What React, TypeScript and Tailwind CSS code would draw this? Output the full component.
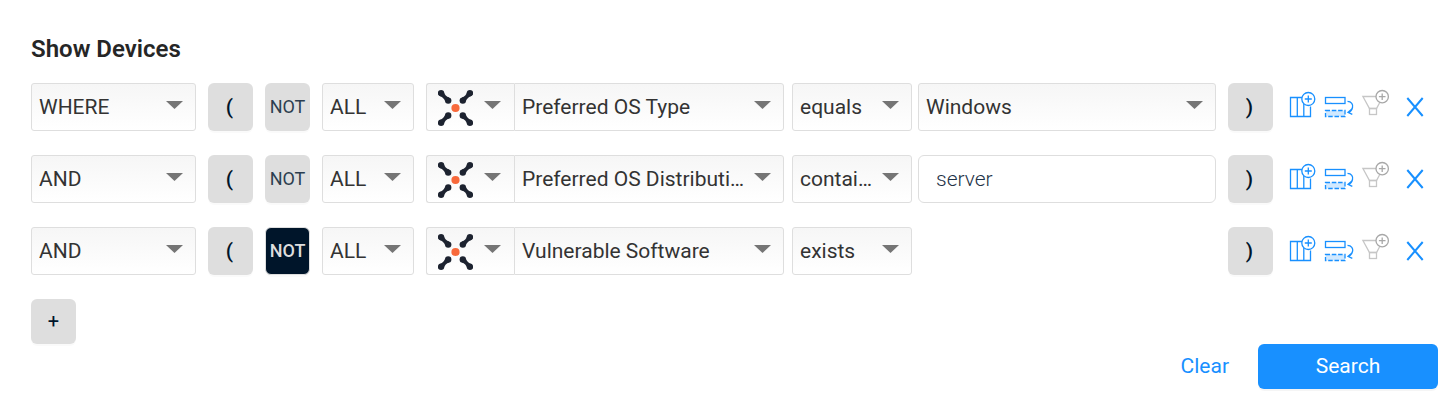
import { useState } from "react";
import type { ReactNode } from "react";

const FRAME =
  "h-12 border border-[#dedede] bg-linear-to-b from-[#f6f6f6] to-white text-[#333333]";

const TOGGLE =
  "h-12 w-[45px] shrink-0 cursor-pointer rounded-md shadow-[0_2px_0_rgba(0,0,0,0.02)]";

function Caret() {
  return (
    <svg
      className="pointer-events-none absolute top-[18px] right-[13px] h-2 w-[17px] fill-[#757575]"
      viewBox="0 0 17 8"
      aria-hidden="true"
    >
      <path d="M0 0H17L8.500 8Z" />
    </svg>
  );
}

interface DropdownProps {
  label: string;
  options: string[];
  className: string;
  corners?: string;
}

function Dropdown({ label, options, className, corners = "rounded-[3px]" }: DropdownProps) {
  return (
    <div className={`relative ${className}`}>
      <select
        aria-label={label}
        className={`${FRAME} ${corners} w-full cursor-pointer appearance-none truncate pt-0.5 pr-[38px] pl-[7px] text-[21px]`}
      >
        {options.map((option) => (
          <option key={option}>{option}</option>
        ))}
      </select>
      <Caret />
    </div>
  );
}

function AdapterDropdown() {
  return (
    <div className="relative w-[88px] shrink-0">
      <select
        aria-label="Adapter"
        className={`${FRAME} w-full cursor-pointer appearance-none rounded-l-[3px] border-r-0`}
      >
        <option value="all" aria-label="All adapters" />
      </select>
      <svg
        className="pointer-events-none absolute top-[7px] left-3 h-9 w-[35px]"
        viewBox="0 0 35 36"
        aria-hidden="true"
      >
        <g fill="#1d2330">
          {["", "translate(35 0) scale(-1 1)", "translate(0 36) scale(1 -1)", "translate(35 36) scale(-1 -1)"].map(
            (transform) => (
              <g key={transform} transform={transform}>
                <circle cx="3" cy="3.200" r="3.200" />
                <circle cx="10.200" cy="10.600" r="3.200" />
                <path d="M1.200 5.800Q5.200 6.800 7.300 11.500L11.300 7.600Q7 6.600 5.800 1.600Z" />
              </g>
            ),
          )}
        </g>
        <circle cx="17.500" cy="18" r="4.100" fill="#f8693b" />
      </svg>
      <Caret />
    </div>
  );
}

function IconButton({ label, className = "", children }: { label: string; className?: string; children: ReactNode }) {
  return (
    <button type="button" aria-label={label} className={`h-12 w-9 cursor-pointer ${className}`}>
      <svg viewBox="0 0 36 48" className="h-12 w-9" fill="none" stroke="currentColor" strokeWidth="1.300">
        {children}
      </svg>
    </button>
  );
}

function RowActions() {
  return (
    <div className="ml-3 flex shrink-0 text-[#1890ff]">
      <IconButton label="Add column">
        <path d="M17 14.500H5.500V33.500H25.500V23.500M12.300 14.500V33.500M18.800 21V33.500" />
        <circle cx="23.300" cy="16" r="6.500" />
        <path d="M19.800 16H26.800M23.300 12.500V19.500" />
      </IconButton>
      <IconButton label="Duplicate row">
        <rect x="4.500" y="14.500" width="19.500" height="6" />
        <rect x="4.500" y="27.500" width="19.500" height="6" fill="#d1e9ff" strokeDasharray="4.500 1.800" />
        <path d="M26.500 18.300C30.500 18.300 32.300 21.500 31.500 24.500C31 27 29.500 28.500 27.500 29.300M30.600 26.300L27 29.400L31.300 31.400" />
      </IconButton>
      <IconButton label="Add filter" className="text-[#c6c6c6]">
        <path d="M19 13.500H5.900L12.500 25.500H19.500L22.500 20" />
        <rect x="12.500" y="25.500" width="7" height="6" />
        <g stroke="#a8a8a8">
          <circle cx="25.200" cy="13.700" r="6.200" />
          <path d="M21.900 13.700H28.500M25.200 10.400V17" />
        </g>
      </IconButton>
      <IconButton label="Remove row" className="ml-1">
        <path d="M10.300 15L25.700 33M25.700 15L10.300 33" strokeWidth="2" />
      </IconButton>
    </div>
  );
}

interface Condition {
  logic: string[];
  negated: boolean;
  field: string;
  operator: string;
  value?: string;
  freeText?: boolean;
}

const CONDITIONS: Condition[] = [
  { logic: ["WHERE"], negated: false, field: "Preferred OS Type", operator: "equals", value: "Windows" },
  {
    logic: ["AND", "OR"],
    negated: false,
    field: "Preferred OS Distribution",
    operator: "contains",
    value: "server",
    freeText: true,
  },
  { logic: ["AND", "OR"], negated: true, field: "Vulnerable Software", operator: "exists" },
];

function ConditionRow({ condition }: { condition: Condition }) {
  const [negated, setNegated] = useState(condition.negated);
  return (
    <div className="flex items-start pr-[5px]">
      <Dropdown label="Logic" options={condition.logic} className="w-[165px] shrink-0" />
      <button type="button" className={`${TOGGLE} ml-3 bg-[#dedede] pt-0.5 pr-0.5 text-[21px] font-medium text-[#00152a]`}>
        (
      </button>
      <button
        type="button"
        aria-pressed={negated}
        onClick={() => setNegated(!negated)}
        className={`${TOGGLE} mx-3 text-lg ${
          negated ? "border border-[#dedede] bg-[#00152a] font-medium text-[#dedede]" : "bg-[#dedede] text-[#2c3e50]"
        }`}
      >
        NOT
      </button>
      <Dropdown label="Scope" options={["ALL", "ANY"]} className="mr-3 w-[92px] shrink-0" />
      <AdapterDropdown />
      <Dropdown
        label="Field"
        options={[condition.field]}
        className="mr-2 w-[270px] shrink-0"
        corners="rounded-r-[3px]"
      />
      <Dropdown label="Operator" options={[condition.operator]} className="mr-1.5 w-[120px] shrink-0" />
      <div className="min-w-0 flex-1">
        {condition.value !== undefined &&
          (condition.freeText ? (
            <input
              type="text"
              aria-label="Value"
              defaultValue={condition.value}
              className="h-12 w-full rounded-md border border-[#dedede] bg-white px-[17px] text-[21px] font-light text-[#1f3347]"
            />
          ) : (
            <Dropdown label="Value" options={[condition.value]} className="w-full" />
          ))}
      </div>
      <button type="button" className={`${TOGGLE} ml-3 bg-[#dedede] pt-0.5 pr-0.5 text-[21px] font-medium text-[#00152a]`}>
        )
      </button>
      <RowActions />
    </div>
  );
}

export default function App() {
  return (
    <main className="min-w-[1240px] bg-white pt-[33px] pr-[15px] pb-3 pl-[31px] font-['Roboto',sans-serif]">
      <h1 className="text-2xl leading-8 font-semibold text-[#262626]">Show Devices</h1>
      <div className="mt-[18px] flex flex-col gap-6">
        {CONDITIONS.map((condition) => (
          <ConditionRow key={condition.field} condition={condition} />
        ))}
      </div>
      <button
        type="button"
        aria-label="Add condition"
        className="mt-6 block h-[45px] w-[45px] cursor-pointer rounded-md bg-[#dedede] pb-0.5 text-xl text-[#00152a] shadow-[0_2px_0_rgba(0,0,0,0.02)]"
      >
        +
      </button>
      <div className="flex justify-end gap-[29px]">
        <button type="button" className="cursor-pointer text-[21px] text-[#1890ff]">
          Clear
        </button>
        <button
          type="button"
          className="h-[45px] w-[180px] cursor-pointer rounded-md bg-[#1890ff] text-[21px] text-white shadow-[0_2px_0_rgba(0,0,0,0.04)]"
        >
          Search
        </button>
      </div>
    </main>
  );
}
